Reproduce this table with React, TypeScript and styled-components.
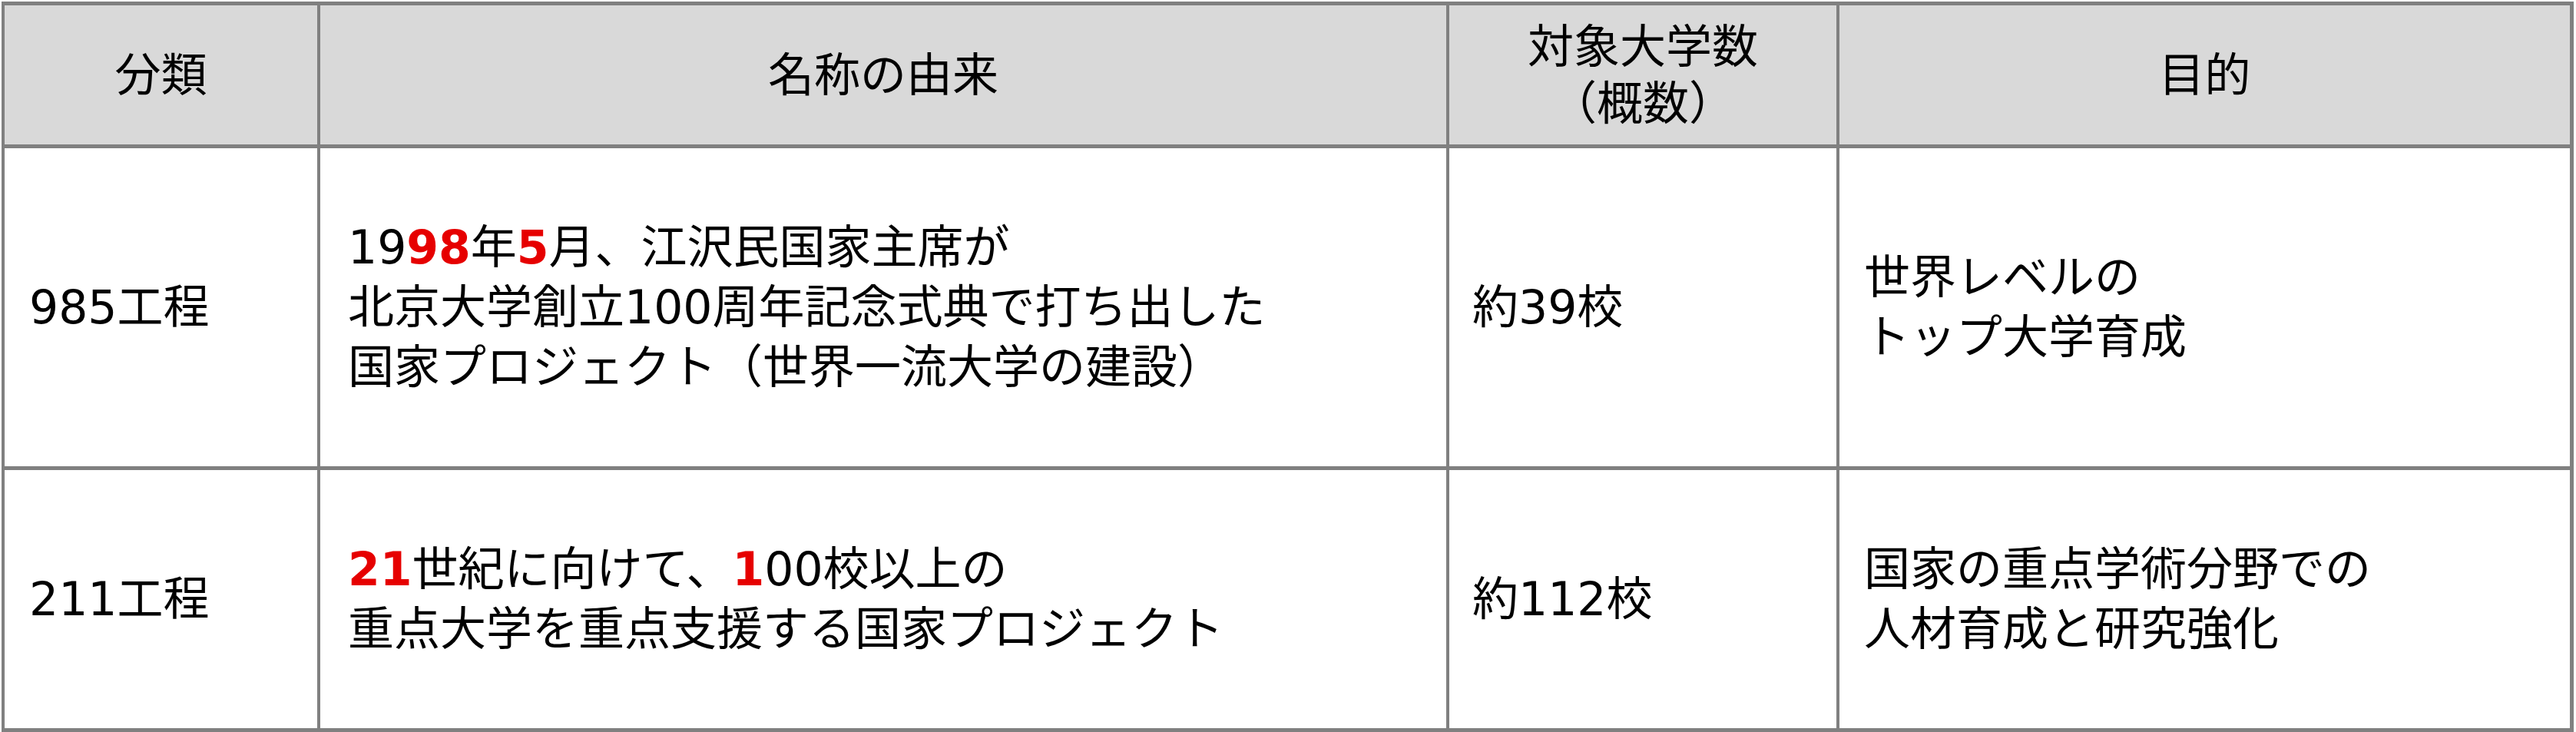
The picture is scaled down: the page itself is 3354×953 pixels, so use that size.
import styled, { createGlobalStyle } from "styled-components";

const GlobalStyle = createGlobalStyle`
  html, body {
    margin: 0;
    padding: 0;
    background: #ffffff;
  }
  body {
    font-family: "DejaVu Sans", "Noto Sans CJK JP", sans-serif;
    color: #000000;
  }
`;

const Page = styled.div`
  padding: 2px 0 0 2px;
  width: 3354px;
  box-sizing: border-box;
`;

const Table = styled.div`
  display: grid;
  width: 3349px;
  box-sizing: border-box;
  grid-template-columns: 407px 1466px 504px 951px;
  grid-template-rows: 181px 414px 336px;
  column-gap: 4px;
  row-gap: 5px;
  padding: 5px 5px 5px 4px;
  background: #808080;
`;

const HeadCell = styled.div`
  background: #d9d9d9;
  display: flex;
  align-items: center;
  justify-content: center;
  text-align: center;
  font-size: 60px;
  line-height: 74px;
`;

const BodyCell = styled.div<{ $pad: number }>`
  background: #ffffff;
  display: flex;
  align-items: center;
  padding-left: ${({ $pad }) => `${$pad}px`};
  font-size: 60px;
  line-height: 78px;
  white-space: nowrap;
`;

const Lines = styled.div`
  display: flex;
  flex-direction: column;
`;

const Red = styled.b`
  color: #e60000;
  font-weight: 700;
`;

const headers = ["分類", "名称の由来", ["対象大学数", "（概数）"], "目的"];

export default function App() {
  return (
    <>
      <GlobalStyle />
      <Page>
        <Table>
          {headers.map((h, i) => (
            <HeadCell key={i}>
              {Array.isArray(h) ? (
                <Lines>
                  {h.map((l) => (
                    <span key={l}>{l}</span>
                  ))}
                </Lines>
              ) : (
                h
              )}
            </HeadCell>
          ))}

          <BodyCell $pad={32}>985工程</BodyCell>
          <BodyCell $pad={36}>
            <Lines>
              <span>
                19<Red>98</Red>年<Red>5</Red>月、江沢民国家主席が
              </span>
              <span>北京大学創立100周年記念式典で打ち出した</span>
              <span>国家プロジェクト（世界一流大学の建設）</span>
            </Lines>
          </BodyCell>
          <BodyCell $pad={30}>約39校</BodyCell>
          <BodyCell $pad={32}>
            <Lines>
              <span>世界レベルの</span>
              <span>トップ大学育成</span>
            </Lines>
          </BodyCell>

          <BodyCell $pad={32}>211工程</BodyCell>
          <BodyCell $pad={36}>
            <Lines>
              <span>
                <Red>21</Red>世紀に向けて、<Red>1</Red>00校以上の
              </span>
              <span>重点大学を重点支援する国家プロジェクト</span>
            </Lines>
          </BodyCell>
          <BodyCell $pad={30}>約112校</BodyCell>
          <BodyCell $pad={32}>
            <Lines>
              <span>国家の重点学術分野での</span>
              <span>人材育成と研究強化</span>
            </Lines>
          </BodyCell>
        </Table>
      </Page>
    </>
  );
}
